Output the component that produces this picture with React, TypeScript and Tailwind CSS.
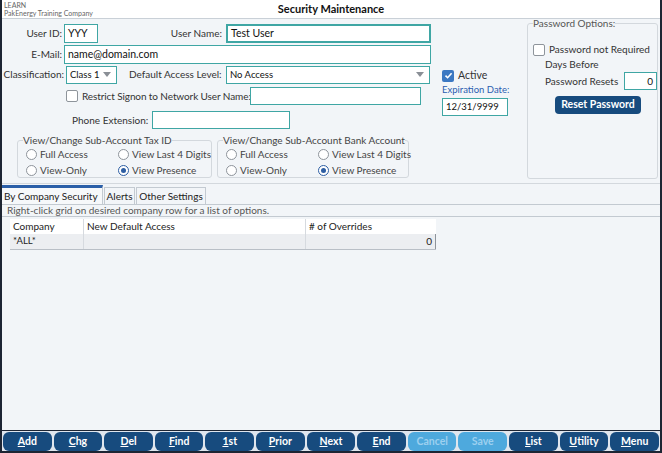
import React from 'react';

const inputBase = 'h-[18px] bg-white border border-[#3fa6a4] leading-none px-[3px] flex items-center text-[#111] whitespace-nowrap';

function Box({ w, value, cls = '', right = false }: { w: string; value?: string; cls?: string; right?: boolean }) {
  return (
    <div className={`${inputBase} ${w} ${cls} ${right ? 'justify-end' : ''}`}>
      {value}
    </div>
  );
}

function Select({ w, value }: { w: string; value: string }) {
  return (
    <div className={`${inputBase} ${w} h-[17px] justify-between text-[9.5px]`}>
      <span>{value}</span>
      <svg width="8" height="5" viewBox="0 0 8 5" className="mr-[2px]">
        <path d="M0 0 L8 0 L4 5 Z" fill="#8a8f96" />
      </svg>
    </div>
  );
}

function Check({ checked = false }: { checked?: boolean }) {
  if (checked) {
    return (
      <span className="w-[12px] h-[12px] rounded-[2px] bg-[#3b78c2] flex items-center justify-center shrink-0">
        <svg width="9" height="9" viewBox="0 0 9 9">
          <path d="M1.5 4.6 L3.6 6.7 L7.6 2.2" stroke="#fff" strokeWidth="1.6" fill="none" />
        </svg>
      </span>
    );
  }
  return <span className="block w-[12px] h-[12px] rounded-[2px] border border-[#8e949b] bg-white shrink-0" />;
}

function Radio({ checked = false, label }: { checked?: boolean; label: string }) {
  return (
    <div className="flex items-center gap-[3px] h-[14px]">
      <span className={`w-[11px] h-[11px] rounded-full border bg-white flex items-center justify-center shrink-0 ${checked ? 'border-[#2d5ea3]' : 'border-[#8e949b]'}`}>
        {checked && <span className="w-[5px] h-[5px] rounded-full bg-[#2d5ea3]" />}
      </span>
      <span>{label}</span>
    </div>
  );
}

function RadioGroup({ title, w }: { title: string; w: string }) {
  return (
    <fieldset className={`${w} min-w-0 h-[44px] border border-[#d3d8dd] rounded-[3px] pl-[8px] pr-0 pb-[2px] pt-0`}>
      <legend className="px-0 text-[#444] leading-[12px] ml-[-3px]">{title}</legend>
      <div className="grid grid-cols-[92px_1fr] gap-y-[2px] text-[#444] mt-[1px]">
        <Radio label="Full Access" />
        <Radio label="View Last 4 Digits" />
        <Radio label="View-Only" />
        <Radio checked label="View Presence" />
      </div>
    </fieldset>
  );
}

const buttons: { u: string; rest: string; disabled?: boolean }[] = [
  { u: 'A', rest: 'dd' },
  { u: 'C', rest: 'hg' },
  { u: 'D', rest: 'el' },
  { u: 'F', rest: 'ind' },
  { u: '1', rest: 'st' },
  { u: 'P', rest: 'rior' },
  { u: 'N', rest: 'ext' },
  { u: 'E', rest: 'nd' },
  { u: '', rest: 'Cancel', disabled: true },
  { u: '', rest: 'Save', disabled: true },
  { u: 'L', rest: 'ist' },
  { u: 'U', rest: 'tility' },
  { u: 'M', rest: 'enu' },
];

export default function App() {
  return (
    <div className="w-[662px] h-[453px] bg-[#f2f5f8] border-x-2 border-b-2 border-[#1d2533] flex flex-col text-[10px] text-[#333] overflow-hidden whitespace-nowrap" style={{ fontFamily: 'Lato, "Noto Sans", sans-serif' }}>
      {/* header */}
      <div className="h-[19px] shrink-0 bg-white border-b border-[#c9d0d7] grid grid-cols-[1fr_auto_1fr] items-center">
        <div className="pl-[2px] text-[7px] leading-[8px] text-[#666]">
          <div>LEARN</div>
          <div>PakEnergy Training Company</div>
        </div>
        <div className="font-bold text-[11px] text-[#111]">Security Maintenance</div>
        <div />
      </div>

      {/* top form */}
      <div className="flex h-[165px] shrink-0 border-b border-[#d3d8dd]">
        {/* left */}
        <div className="w-[438px] pt-[5px]">
          <div className="flex items-center h-[19px]">
            <span className="w-[60px] text-right">User ID:</span>
            <Box w="w-[34px] ml-[2px] h-[19px] text-[10.5px]" value="YYY" />
            <span className="w-[124px] text-right">User Name:</span>
            <Box w="w-[205px] ml-[4px] h-[19px] text-[10.5px]" cls="border-[#1f3b63] border-2" value="Test User" />
          </div>
          <div className="flex items-center h-[19px] mt-[2px]">
            <span className="w-[60px] text-right">E-Mail:</span>
            <Box w="w-[367px] ml-[2px] h-[19px] text-[10.5px]" value="name@domain.com" />
          </div>
          <div className="flex items-center h-[17px] mt-[2px]">
            <span className="w-[62px] text-right">Classification:</span>
            <div className="ml-[2px]"><Select w="w-[51px]" value="Class 1" /></div>
            <span className="ml-[12px] w-[97px]">Default Access Level:</span>
            <Select w="w-[204px]" value="No Access" />
          </div>
          <div className="flex items-center h-[18px] mt-[4px]">
            <div className="ml-[64px]"><Check /></div>
            <span className="ml-[4px] w-[168px] tracking-[-0.1px]">Restrict Signon to Network User Name:</span>
            <Box w="w-[171px] h-[18px]" />
          </div>
          <div className="flex items-center h-[18px] mt-[6px]">
            <span className="ml-[70px] w-[80px]">Phone Extension:</span>
            <Box w="w-[138px] h-[18px]" />
          </div>
          <div className="flex gap-[5px] ml-[15px] mt-[5px]">
            <RadioGroup title="View/Change Sub-Account Tax ID" w="w-[195px]" />
            <RadioGroup title="View/Change Sub-Account Bank Account" w="w-[192px]" />
          </div>
        </div>

        {/* middle */}
        <div className="w-[87px] pl-[2px] pt-[50px]">
          <div className="flex items-center gap-[4px] h-[13px]">
            <Check checked />
            <span className="text-[10.5px]">Active</span>
          </div>
          <div className="mt-[2px] text-[9.5px] leading-[12px] text-[#2a5db0]">Expiration Date:</div>
          <Box w="w-[66px] h-[18px] mt-[2px] text-[9.5px]" value="12/31/9999" />
        </div>

        {/* password options */}
        <fieldset className="w-[131px] min-w-0 h-[162px] border border-[#d3d8dd] rounded-[3px] pl-[5px] pr-0 pt-0 mt-[-2px]">
          <legend className="text-[#555] leading-[12px] px-0">Password Options:</legend>
          <div className="flex items-center gap-[4px] mt-[13px]">
            <Check />
            <span>Password not Required</span>
          </div>
          <div className="ml-[12px] mt-0 leading-[14px]">Days Before</div>
          <div className="flex items-center mt-[1px]">
            <span className="ml-[12px] w-[80px] leading-[14px]">Password Resets</span>
            <Box w="w-[33px] h-[18px]" right value="0" />
          </div>
          <div className="flex mt-[6px] pl-[22px]">
            <div className="w-[86px] h-[18px] rounded-[4px] bg-[#174b7e] text-white font-bold text-[10.5px] flex items-center justify-center">Reset Password</div>
          </div>
        </fieldset>
      </div>

      {/* tabs */}
      <div className="flex items-end h-[20px] shrink-0 mt-[1px] border-b border-[#c3cad1]">
        <div className="h-[19px] w-[101px] border-t-[3px] border-[#2b5fa8] border-r border-r-[#c3cad1] px-[2px] flex items-center text-[#222] bg-[#f6f8fa]">By Company Security</div>
        <div className="h-[17px] w-[31px] ml-[1px] border border-b-0 border-[#c3cad1] flex items-center justify-center text-[#222]">Alerts</div>
        <div className="h-[17px] w-[70px] ml-[1px] border border-b-0 border-[#c3cad1] flex items-center justify-center text-[#222]">Other Settings</div>
      </div>
      <div className="h-[12px] shrink-0 border-b border-[#c3cad1] pl-[5px] leading-[11px] text-[#555]">Right-click grid on desired company row for a list of options.</div>

      {/* grid */}
      <div className="ml-[8px] mt-[2px] w-[426px] text-[#222]">
        <div className="flex h-[15px] bg-white">
          <div className="w-[73px] pl-[3px] flex items-center">Company</div>
          <div className="w-[222px] pl-[3px] border-l border-[#d6dadf] flex items-center">New Default Access</div>
          <div className="flex-1 pl-[3px] border-l border-[#d6dadf] flex items-center"># of Overrides</div>
        </div>
        <div className="flex h-[16px] bg-[#eceef1] border-b border-[#b9bfc6]">
          <div className="w-[73px] pl-[3px] flex items-center text-[9.5px]">*ALL*</div>
          <div className="w-[222px] border-l border-[#d6dadf]" />
          <div className="flex-1 pr-[3px] border-l border-[#d6dadf] border-r border-r-[#8e949b] flex items-center justify-end">0</div>
        </div>
      </div>

      <div className="flex-1" />

      {/* button bar */}
      <div className="h-[21px] shrink-0 border-t border-[#1d2533] flex gap-[2px] px-[1px] pt-[1px] bg-[#dfe6ee]">
        {buttons.map((b, i) => (
          <div
            key={i}
            className={`flex-1 h-[19px] rounded-[6px] font-bold text-[10.5px] flex items-center justify-center ${b.disabled ? 'bg-[#4ea9dd] text-[#9dd0ef]' : 'bg-[#174b7e] text-white'}`}
          >
            {b.u && <span className="underline">{b.u}</span>}
            {b.rest}
          </div>
        ))}
      </div>
    </div>
  );
}
